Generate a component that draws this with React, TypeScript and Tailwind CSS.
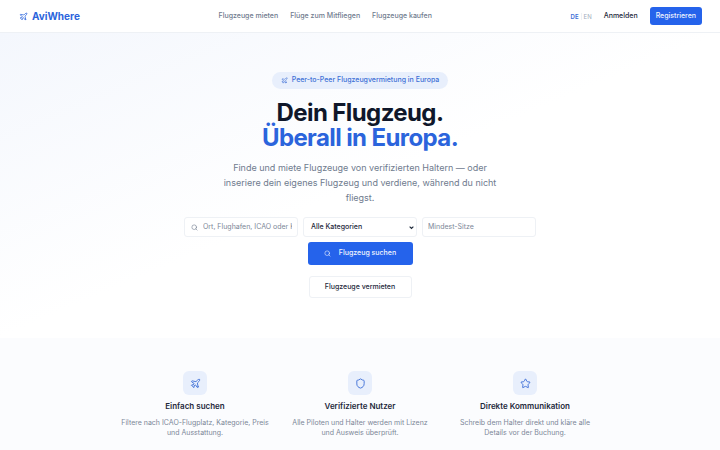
import { Plane, Search, Shield, Star } from 'lucide-react'

const navLinks = ['Flugzeuge mieten', 'Flüge zum Mitfliegen', 'Flugzeuge kaufen']

const features = [
  {
    icon: Plane,
    title: 'Einfach suchen',
    text: 'Filtere nach ICAO-Flugplatz, Kategorie, Preis und Ausstattung.',
  },
  {
    icon: Shield,
    title: 'Verifizierte Nutzer',
    text: 'Alle Piloten und Halter werden mit Lizenz und Ausweis überprüft.',
  },
  {
    icon: Star,
    title: 'Direkte Kommunikation',
    text: 'Schreib dem Halter direkt und kläre alle Details vor der Buchung.',
  },
]

export default function App() {
  return (
    <div className="h-[450px] overflow-hidden bg-white font-['Inter',sans-serif] text-[#0f172a]">
      <header className="h-[33px] border-b border-[#eef1f5] bg-white">
        <nav className="flex h-[32px] items-center justify-between pl-[19px] pr-[18px]">
          <div className="flex items-center gap-[4px] text-[#2b64dc]">
            <Plane className="h-[9px] w-[9px]" strokeWidth={2} />
            <span className="text-[10px] font-bold">AviWhere</span>
          </div>
          <div className="flex items-center gap-[12px] text-[7px] font-medium text-[#6f7b8e]">
            {navLinks.map((link) => (
              <a key={link}>{link}</a>
            ))}
          </div>
          <div className="flex items-center">
            <span className="text-[6px] font-semibold text-[#3d6fd6]">DE</span>
            <span className="mx-[2px] h-[7px] w-px bg-[#eef1f5]" />
            <span className="text-[6px] text-[#a3aebd]">EN</span>
            <span className="ml-[12px] text-[7px] font-medium text-[#1e293b]">Anmelden</span>
            <button className="ml-[12px] h-[18px] rounded-[3px] bg-[#2563eb] px-[6px] text-[7px] font-medium text-[#f1f5fe]">
              Registrieren
            </button>
          </div>
        </nav>
      </header>

      <section className="flex h-[305px] flex-col items-center bg-gradient-to-br from-[#f4f7fd] via-white to-white pt-[39px]">
        <div className="flex h-[17px] items-center gap-[4px] rounded-full bg-[#e8effc] px-[9px] text-[7px] font-medium text-[#3d6fd6]">
          <Plane className="h-[7px] w-[7px]" />
          Peer-to-Peer Flugzeugvermietung in Europa
        </div>
        <h1 className="mt-[11px] text-center text-[24px] font-bold leading-[25px] tracking-[-0.6px]">
          Dein Flugzeug.
          <br />
          <span className="text-[#2b64dc]">Überall in Europa.</span>
        </h1>
        <p className="mt-[10px] w-[280px] text-center text-[9px] leading-[15px] text-[#6f7b8e]">
          Finde und miete Flugzeuge von verifizierten Haltern — oder inseriere dein eigenes Flugzeug und verdiene, während du nicht fliegst.
        </p>
        <div className="mt-[12px] flex gap-[5px]">
          <div className="flex h-[20px] w-[114px] items-center gap-[5px] rounded-[3px] border border-[#eef1f5] bg-white pl-[6px] pr-[5px]">
            <Search className="h-[7px] w-[7px] shrink-0 text-[#6f7b8e]" />
            <input
              className="w-full min-w-0 bg-transparent text-[7px] outline-none placeholder:text-[#7c8798]"
              placeholder="Ort, Flughafen, ICAO oder Kennung"
            />
          </div>
          <div className="flex h-[20px] w-[114px] items-center justify-between rounded-[3px] border border-[#eef1f5] bg-white pl-[7px] pr-[2px] text-[7px] font-medium text-[#1e293b]">
            Alle Kategorien
            <svg viewBox="0 0 8 8" className="h-[5px] w-[5px]" fill="none" stroke="currentColor" strokeWidth={1.8}>
              <path d="M1 2.5 4 5.5 7 2.5" />
            </svg>
          </div>
          <div className="flex h-[20px] w-[114px] items-center rounded-[3px] border border-[#eef1f5] bg-white px-[5px]">
            <input
              className="w-full min-w-0 bg-transparent text-[7px] outline-none placeholder:text-[#7c8798]"
              placeholder="Mindest-Sitze"
            />
          </div>
        </div>
        <button className="mt-[5px] flex h-[23px] w-[105px] items-center justify-center gap-[8px] rounded-[3px] bg-[#2563eb] text-[7px] font-medium text-[#f1f5fe]">
          <Search className="h-[7px] w-[7px]" />
          Flugzeug suchen
        </button>
        <button className="mt-[11px] h-[22px] w-[103px] rounded-[3px] border border-[#eef1f5] bg-white text-[7px] font-medium text-[#1e293b]">
          Flugzeuge vermieten
        </button>
      </section>

      <section className="h-[112px] bg-[#fbfcfe] pt-[33px]">
        <div className="mx-auto flex w-[478px] justify-between">
          {features.map(({ icon: Icon, title, text }) => (
            <div key={title} className="flex w-[148px] flex-col items-center text-center">
              <div className="flex h-[24px] w-[24px] items-center justify-center rounded-[6px] bg-[#e8effc] text-[#3d6fd6]">
                <Icon className="h-[11px] w-[11px]" />
              </div>
              <h3 className="mt-[4px] text-[8px] font-semibold leading-[14px] text-[#1e293b]">{title}</h3>
              <p className="mt-[5px] text-[7px] leading-[10px] text-[#7c8798]">{text}</p>
            </div>
          ))}
        </div>
      </section>
    </div>
  )
}
